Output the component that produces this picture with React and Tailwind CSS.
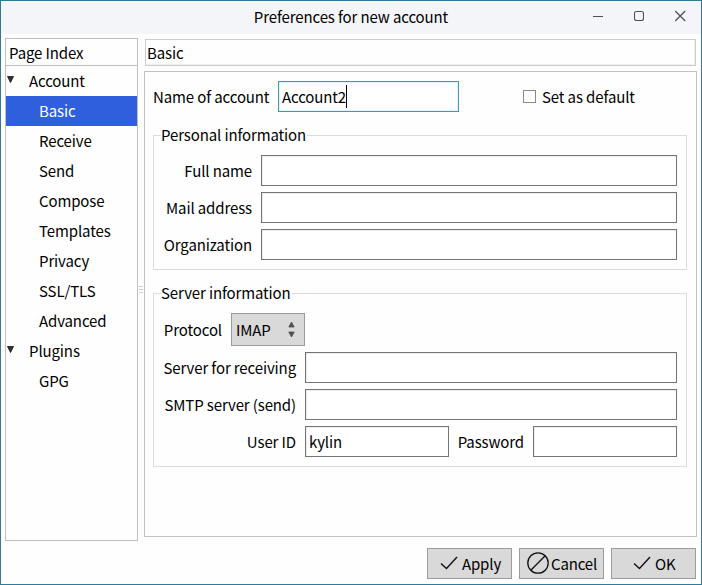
import React from 'react';

const accountPages = ['Basic', 'Receive', 'Send', 'Compose', 'Templates', 'Privacy', 'SSL/TLS', 'Advanced'];

function Field({ value = '', className = '' }) {
  return (
    <div className={`flex h-[31px] items-center border border-[#747474] bg-white pl-[3px] shadow-[inset_1px_1px_0_#ededed] ${className}`}>
      {value}
    </div>
  );
}

function Label({ children, className = '' }) {
  return <span className={`shrink-0 pr-[9px] text-right ${className}`}>{children}</span>;
}

function Group({ title, className = '', children }) {
  return (
    <fieldset className={`ml-2 w-[534px] border border-[#dcdcdc] pr-[9px] ${className}`}>
      <legend className="ml-[7px] h-[23px] pr-px leading-[21px]">{title}</legend>
      {children}
    </fieldset>
  );
}

function TreeParent({ children }) {
  return (
    <div className="flex h-[30px] items-center">
      <svg width="8" height="7" viewBox="0 0 8 7" className="mr-[14px] mb-[3px] ml-px">
        <path d="M0.5 0.5h6L3.5 6.5z" fill="#333" stroke="#111" strokeWidth="0.8" />
      </svg>
      {children}
    </div>
  );
}

function TreeChild({ selected, children }) {
  return (
    <div className={`flex h-[30px] items-center pl-[33px] ${selected ? 'bg-[#2f5fdc] text-white' : ''}`}>
      {children}
    </div>
  );
}

function Check() {
  return (
    <svg width="18" height="14" viewBox="0 0 18 14" fill="none" stroke="#111" strokeWidth="1.4" className="mb-px shrink-0">
      <path d="M1 7.5l5.5 5L17 1" />
    </svg>
  );
}

function Button({ className = '', children }) {
  return (
    <button className={`flex h-[31px] w-[85px] items-center border border-[#9b9b9b] bg-[#d9d9d9] tracking-[-0.15px] ${className}`}>
      {children}
    </button>
  );
}

export default function App() {
  return (
    <div className="flex h-[585px] w-[702px] flex-col border border-[#2f7b98] bg-[#fefefe] font-['Noto_Sans_CJK_SC',sans-serif] text-[15px] leading-[24px] tracking-[-0.12px] whitespace-nowrap text-black">
      <header className="flex h-[33px] shrink-0 bg-[#f4f5f8]">
        <h1 className="ml-[120px] w-[460px] pt-[4px] text-center">Preferences for new account</h1>
        <div className="flex items-start pt-[9px] pl-[12px] text-[#4d4f52]">
          <svg width="10" height="12" viewBox="0 0 10 12" className="mr-[31px]">
            <path d="M0 6.5h10" stroke="currentColor" />
          </svg>
          <svg width="10" height="12" viewBox="0 0 10 12" className="mr-[31px]">
            <rect x="0.5" y="1.5" width="9" height="9" rx="2" fill="none" stroke="currentColor" strokeWidth="1.1" />
          </svg>
          <svg width="12" height="12" viewBox="0 0 12 12">
            <path d="M0.2 1l10 10M10.2 1l-10 10" stroke="currentColor" strokeWidth="1.2" />
          </svg>
        </div>
      </header>

      <div className="flex pt-1 pl-1">
        <nav className="h-[503px] w-[133px] shrink-0 border border-[#c0c0c0]">
          <div className="flex h-[27px] items-center border-b border-[#c0c0c0] pt-[2px] pl-[3px]">Page Index</div>
          <TreeParent>Account</TreeParent>
          {accountPages.map((page) => (
            <TreeChild key={page} selected={page === 'Basic'}>{page}</TreeChild>
          ))}
          <TreeParent>Plugins</TreeParent>
          <TreeChild>GPG</TreeChild>
        </nav>

        <div className="flex h-[503px] w-[6px] flex-col items-center justify-center gap-[2px]">
          <i className="h-px w-1 bg-[#cfcfcf]" />
          <i className="h-px w-1 bg-[#cfcfcf]" />
          <i className="h-px w-1 bg-[#cfcfcf]" />
        </div>

        <main>
          <div className="mt-px ml-px flex h-[27px] w-[551px] items-center border border-[#cccccc] pt-px pl-px shadow-[inset_-1px_-1px_0_#f0f0f0]">Basic</div>
          <section className="mt-[5px] h-[466px] w-[553px] border border-[#c0c0c0] pt-[9px]">
            <div className="flex items-center pl-2">
              <Label className="w-[125px] pr-[10px]">Name of account</Label>
              <div className="flex h-[31px] w-[181px] items-center border border-[#3a9cbd] bg-white pl-[3px] shadow-[inset_0_0_0_1px_#e3f2f6]">
                Account2<span className="h-[23px] w-px bg-black" />
              </div>
              <span className="mr-[6px] mb-px ml-[64px] h-[13px] w-[13px] border border-[#8a8a8a]" />
              <span>Set as default</span>
            </div>

            <Group title="Personal information" className="mt-[12px] h-[146px]">
              <div className="mt-[8px] flex flex-col gap-[6px]">
                {['Full name', 'Mail address', 'Organization'].map((name) => (
                  <div key={name} className="flex items-center">
                    <Label className="w-[107px]">{name}</Label>
                    <Field className="grow" />
                  </div>
                ))}
              </div>
            </Group>

            <Group title="Server information" className="mt-[12px] h-[185px]">
              <div className="mt-[8px] flex flex-col gap-[6px]">
                <div className="flex items-center">
                  <Label className="w-[77px]">Protocol</Label>
                  <div className="flex h-[33px] w-[74px] items-center justify-between border border-[#9b9b9b] bg-[#d9d9d9] pr-[9px] pl-1">
                    IMAP
                    <svg width="7" height="17" viewBox="0 0 7 17">
                      <path d="M3.5 1L6.2 6H0.8zM3.5 16L6.2 11H0.8z" fill="#555" stroke="#444" strokeWidth="0.7" />
                    </svg>
                  </div>
                </div>
                <div className="flex items-center">
                  <Label className="w-[151px]">Server for receiving</Label>
                  <Field className="grow" />
                </div>
                <div className="flex items-center">
                  <Label className="w-[151px]">SMTP server (send)</Label>
                  <Field className="grow" />
                </div>
                <div className="flex items-center">
                  <Label className="w-[151px]">User ID</Label>
                  <Field className="w-[144px]" value="kylin" />
                  <Label className="w-[84px]">Password</Label>
                  <Field className="w-[144px]" />
                </div>
              </div>
            </Group>
          </section>
        </main>
      </div>

      <footer className="mt-[7px] flex justify-end gap-[7px] pr-[5px]">
        <Button className="gap-1 pl-[12px]"><Check /><span>Apply</span></Button>
        <Button className="gap-[2px] pl-[7px]">
          <svg width="22" height="22" viewBox="0 0 22 22" fill="none" stroke="#111" strokeWidth="1.3" className="mb-px shrink-0">
            <circle cx="11" cy="11" r="10.2" />
            <path d="M3.8 18.2L18.2 3.8" />
          </svg>
          <span>Cancel</span>
        </Button>
        <Button className="gap-1 pl-[21px]"><Check /><span>OK</span></Button>
      </footer>
    </div>
  );
}
